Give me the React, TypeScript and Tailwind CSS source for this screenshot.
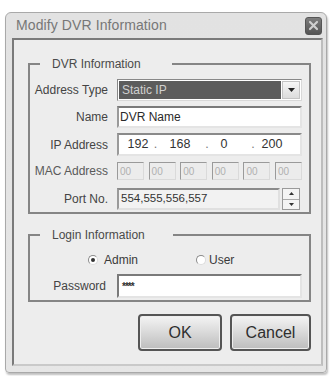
import React from "react";

const font = { fontFamily: '"Liberation Sans", Arial, sans-serif' };

function Group({ title, gapW, children, className }: { title: string; gapW: string; children: React.ReactNode; className?: string }) {
  return (
    <div className={"relative border-2 border-[#858585] " + (className ?? "")}>
      <span className={"absolute -top-[9px] left-[10px] h-[16px] bg-[#ededed] pl-[12px] text-[12px] leading-[16px] text-[#4a4a4a] " + gapW}>
        {title}
      </span>
      {children}
    </div>
  );
}

function Label({ children }: { children: React.ReactNode }) {
  return <div className="w-[76px] shrink-0 text-right text-[12px] leading-none text-[#444]">{children}</div>;
}

function Radio({ checked }: { checked?: boolean }) {
  return (
    <span className="flex h-[10px] w-[10px] items-center justify-center rounded-full border border-t-[#8a8a8a] border-l-[#8a8a8a] border-r-[#dcdcdc] border-b-[#dcdcdc] bg-white">
      {checked && <span className="h-[4px] w-[4px] rounded-full bg-[#333]" />}
    </span>
  );
}

export default function App() {
  return (
    <div className="h-[376px] w-[331px] overflow-hidden bg-white pl-[5px] pt-[12px]" style={font}>
      <div className="flex h-[361px] w-[322px] flex-col rounded-t-[6px] rounded-b-[4px] border border-[#a9a9a9] bg-gradient-to-b from-[#e2e2e2] to-[#e6e6e6] shadow-[1px_2px_2px_rgba(0,0,0,0.25)]">
        {/* title bar */}
        <div className="flex h-[25px] shrink-0 items-center justify-between pl-[10px] pr-[4px]">
          <span className="text-[14px] tracking-[0.1px] text-[#777]">Modify DVR Information</span>
          <span className="flex h-[18px] w-[17px] items-center justify-center rounded-[3px] border border-[#555] bg-gradient-to-b from-[#7d7d7d] to-[#555]">
            <svg width="11" height="11" viewBox="0 0 11 11">
              <path d="M2 2 L9 9 M9 2 L2 9" stroke="#cfcfcf" strokeWidth="2.2" strokeLinecap="round" />
            </svg>
          </span>
        </div>
        {/* client */}
        <div className="mb-[6px] ml-[6px] mr-[3px] flex flex-1 flex-col border-2 border-[#7a7a7a] border-b-[#c9c9c9] border-r-[#bdbdbd] bg-[#ededed] pl-[14px] pr-[10px] pt-[23px]">
          <Group title="DVR Information" gapW="w-[132px]">
            <div className="flex flex-col pb-[2px] pl-[2px] pr-[7px] pt-[14px]">
              {/* Address type */}
              <div className="flex h-[22px] items-center gap-[9px]">
                <Label>Address Type</Label>
                <div className="flex h-[22px] w-[185px] items-center border border-t-[#888] border-l-[#888] border-r-[#d8d8d8] border-b-[#d8d8d8] bg-white p-[1px]">
                  <div className="flex h-full flex-1 items-center bg-[#5c5c5c] pl-[3px] text-[12px] text-[#d0d0d0]">Static IP</div>
                  <div className="ml-[1px] flex h-full w-[18px] items-center justify-center border border-[#c4c4c4] bg-gradient-to-b from-[#f6f6f6] to-[#dcdcdc]">
                    <svg width="7" height="4" viewBox="0 0 7 4"><path d="M0 0 H7 L3.5 4 Z" fill="#222" /></svg>
                  </div>
                </div>
              </div>
              {/* Name */}
              <div className="mt-[5px] flex h-[22px] items-center gap-[9px]">
                <Label>Name</Label>
                <div className="flex h-[22px] w-[185px] items-center border-2 border-t-[#7a7a7a] border-l-[#9a9a9a] border-r-[#e4e4e4] border-b-[#e4e4e4] bg-white pl-[1px] text-[12px] text-[#2a2a2a]">DVR Name</div>
              </div>
              {/* IP */}
              <div className="mt-[5px] flex h-[23px] items-center gap-[9px]">
                <Label>IP Address</Label>
                <div className="flex h-[23px] w-[185px] items-center border-2 border-t-[#8a8a8a] border-l-[#9a9a9a] border-r-[#e4e4e4] border-b-[#e4e4e4] bg-white pl-[4px] text-[12.5px] text-[#333]">
                  <span className="w-[30px] text-center">192</span>
                  <span className="w-[5px] text-center text-[#777]">.</span>
                  <span className="w-[44px] text-center">168</span>
                  <span className="w-[10px] text-center text-[#777]">.</span>
                  <span className="w-[24px] text-center">0</span>
                  <span className="w-[10px]" />
                  <span className="w-[14px] text-center text-[#777]">.</span>
                  <span className="w-[24px] text-center">200</span>
                </div>
              </div>
              {/* MAC */}
              <div className="mt-[4px] flex h-[22px] items-center gap-[9px]">
                <Label><span className="text-[#5a5a5a]">MAC Address</span></Label>
                <div className="flex w-[185px] justify-between">
                  {[0, 1, 2, 3, 4, 5].map((i) => (
                    <div key={i} className="flex h-[18px] w-[27px] items-center border border-t-[#9a9a9a] border-l-[#9a9a9a] border-r-[#dadada] border-b-[#dadada] bg-[#ececec] pl-[2px] text-[10px] text-[#b0b0b0]">00</div>
                  ))}
                </div>
              </div>
              {/* Port */}
              <div className="mt-[6px] flex h-[22px] items-center gap-[9px]">
                <Label>Port No.</Label>
                <div className="flex h-[22px] w-[185px] items-center">
                  <div className="flex h-full w-[163px] items-center border-2 border-t-[#8a8a8a] border-l-[#9a9a9a] border-r-[#e0e0e0] border-b-[#e0e0e0] bg-[#f2f2f2] pl-[2px] text-[11.5px] text-[#333]">554,555,556,557</div>
                  <div className="ml-[2px] flex h-full w-[18px] flex-col border border-[#9a9a9a] bg-[#f4f4f4]">
                    <div className="flex flex-1 items-center justify-center border-b border-[#aaa]">
                      <svg width="5" height="3" viewBox="0 0 5 3"><path d="M0 3 H5 L2.5 0 Z" fill="#333" /></svg>
                    </div>
                    <div className="flex flex-1 items-center justify-center">
                      <svg width="5" height="3" viewBox="0 0 5 3"><path d="M0 0 H5 L2.5 3 Z" fill="#333" /></svg>
                    </div>
                  </div>
                </div>
              </div>
            </div>
          </Group>

          <Group title="Login Information" gapW="w-[133px]" className="mt-[20px]">
            <div className="flex flex-col pb-[2px] pl-[2px] pr-[7px] pt-[17px]">
              <div className="flex h-[14px] items-center text-[12px] text-[#3a3a3a]">
                <div className="ml-[56px] flex items-center gap-[6px]">
                  <Radio checked />
                  <span>Admin</span>
                </div>
                <div className="ml-[58px] flex items-center gap-[3px]">
                  <Radio />
                  <span>User</span>
                </div>
              </div>
              <div className="mt-[7px] flex h-[24px] items-center gap-[9px]">
                <div className="w-[76px] shrink-0 pr-[2px] text-right text-[12px] leading-none text-[#444]">Password</div>
                <div className="flex h-[24px] w-[185px] items-center border-2 border-t-[#7a7a7a] border-l-[#7a7a7a] border-r-[#e4e4e4] border-b-[#e4e4e4] bg-white pl-[3px] text-[10px] font-bold tracking-[-1px] text-[#333]">****</div>
              </div>
            </div>
          </Group>

          <div className="mt-[12px] flex justify-end gap-[8px]">
            <button className="flex h-[37px] w-[84px] items-center justify-center rounded-[4px] border-2 border-[#555] bg-gradient-to-b from-[#f4f4f4] via-[#d9d9d9] to-[#bdbdbd] text-[16px] text-[#2e2e2e] shadow-[inset_0_0_0_1px_#eee]">OK</button>
            <button className="flex h-[37px] w-[81px] items-center justify-center rounded-[4px] border-2 border-[#555] bg-gradient-to-b from-[#f4f4f4] via-[#d9d9d9] to-[#bdbdbd] text-[16px] text-[#2e2e2e] shadow-[inset_0_0_0_1px_#eee]">Cancel</button>
          </div>
        </div>
      </div>
    </div>
  );
}
